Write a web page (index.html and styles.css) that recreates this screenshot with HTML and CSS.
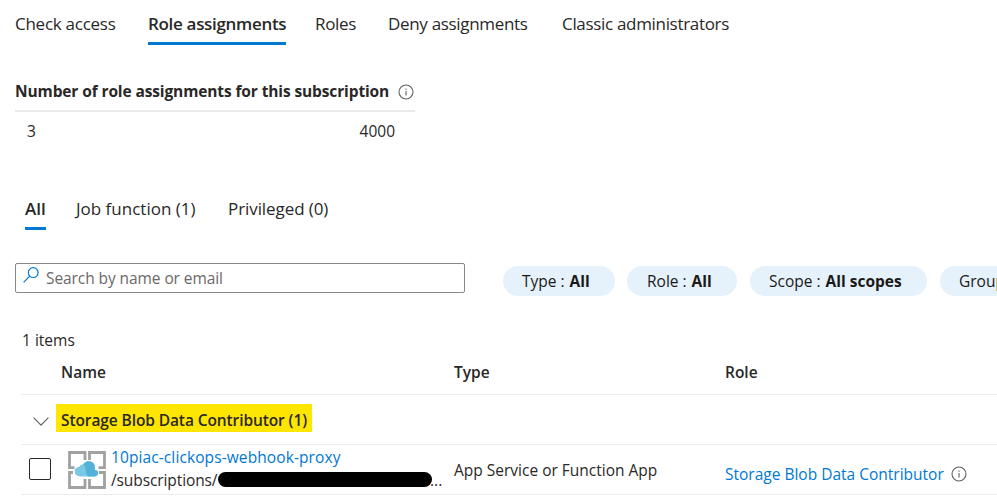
FILE: index.html
```html
<!DOCTYPE html>
<html lang="en">
<head>
<meta charset="utf-8">
<title>Role assignments</title>
<link rel="stylesheet" href="styles.css">
</head>
<body>
<nav class="tabs">
  <a class="tab t-check">Check access</a>
  <a class="tab t-assign active">Role assignments</a>
  <a class="tab t-roles">Roles</a>
  <a class="tab t-deny">Deny assignments</a>
  <a class="tab t-classic">Classic administrators</a>
</nav>
<section class="quota">
  <h2 class="quota-title"><span class="quota-label">Number of role assignments for this subscription</span>
    <svg class="info" viewBox="0 0 16 16"><circle cx="8" cy="8" r="7"/><path d="M8 7v4.5M8 4.5v1.2"/></svg>
  </h2>
  <div class="quota-values"><span>3</span><span>4000</span></div>
</section>
<nav class="subtabs">
  <a class="tab s-all active">All</a>
  <a class="tab s-job">Job function (1)</a>
  <a class="tab s-priv">Privileged (0)</a>
</nav>
<div class="filters">
  <div class="search">
    <svg class="glass" viewBox="0 0 16 16"><circle cx="10.2" cy="5.6" r="4.9"/><path d="M6.7 9.2L.6 15.4"/></svg>
    <span class="placeholder">Search by name or email</span>
  </div>
  <div class="pill p-type"><span>Type :</span><b>All</b></div>
  <div class="pill p-role"><span>Role :</span><b>All</b></div>
  <div class="pill p-scope"><span>Scope :</span><b>All scopes</b></div>
  <div class="pill p-group"><span>Group</span></div>
</div>
<div class="count">1 items</div>
<div class="grid">
  <div class="row head"><span class="h-name">Name</span><span class="h-type">Type</span><span>Role</span></div>
  <div class="row group">
    <svg class="chevron" viewBox="0 0 16 9"><path d="M.6.7L8 8.1 15.4.7"/></svg>
    <span class="mark">Storage Blob Data Contributor (1)</span>
  </div>
  <div class="row item">
    <span class="check"></span>
    <svg class="app" viewBox="0 0 38 38">
      <path class="frame" d="M6.500 16.700H1.500V1.500h15.500V9M21.500 9V1.500h15v15.200H30.500M31 21.500h5.500v15h-15V28M17 28v8.500H1.500v-15H5"/>
      <g transform="translate(.5 .3) scale(.95)">
        <path class="cloud" d="M12.600 26.400C9 26.400 6.500 24 6.500 21.200c0-2.800 2.200-4.800 5-4.900.7-1.600 2.400-2.600 4-2.300 1.100-2.300 3.300-3.600 5.700-3.600 4.200 0 7.100 3.300 6.600 7.500-.1.600-.2 1.200-.4 1.700 2.500-.1 3.900 1.300 3.900 3.300s-1.600 3.500-3.800 3.500z"/>
        <path class="shade" d="M15.500 14c1.100-2.300 3.300-3.600 5.700-3.600 4.200 0 7.100 3.300 6.600 7.500-.1.600-.2 1.200-.4 1.700 2.500-.1 3.900 1.300 3.900 3.300s-1.600 3.500-3.800 3.500h-7c-3.400-3-.9-9.300-5-12.400z"/>
      </g>
    </svg>
    <div class="who">
      <a class="link who-name">10piac-clickops-webhook-proxy</a>
      <div class="path"><span class="sub">/subscriptions/</span><i class="redact"></i><span class="dots">...</span></div>
    </div>
    <span class="kind">App Service or Function App</span>
    <span class="role"><a class="link role-name">Storage Blob Data Contributor</a>
      <svg class="info" viewBox="0 0 16 16"><circle cx="8" cy="8" r="7"/><path d="M8 7v4.500M8 4.500v1.200"/></svg></span>
  </div>
</div>
</body>
</html>
```
FILE: styles.css
```css
* { box-sizing: border-box; }
body {
  margin: 0;
  width: 997px;
  height: 503px;
  overflow: hidden;
  background: #fff;
  color: #292827;
  font: 15.5px/20px "Open Sans", "Noto Sans", sans-serif;
  white-space: nowrap;
}
svg { fill: none; display: block; flex: none; }
.tabs, .subtabs { display: flex; font-size: 17px; line-height: 24px; }
.tabs { padding: 12px 0 0 15px; height: 45px; letter-spacing: -.32px; }
.subtabs { padding: 12px 0 0 25px; height: 45px; margin-top: 41px; }
.tab { height: 33px; flex: none; }
.active { font-weight: 600; border-bottom: 3px solid #0078d4; }
.t-check { width: 101px; margin-right: 32px; letter-spacing: -.26px; }
.t-assign { width: 138px; margin-right: 29px; }
.t-roles { width: 41px; margin-right: 32px; }
.t-deny { width: 140px; margin-right: 34px; }
.s-all { width: 21px; margin-right: 30px; }
.s-job { width: 120px; margin-right: 32px; }
.s-priv { letter-spacing: -.08px; }
.quota { margin: 36px 0 0 15px; width: 400px; }
.quota-title { display: flex; align-items: center; gap: 9px; margin: 0; height: 31px; padding-bottom: 8px; border-bottom: 2px solid #eaeaea; font-size: 15.5px; font-weight: 700; }
.quota-label { width: 374px; padding-bottom: 1px; letter-spacing: -.12px; }
.info { width: 16px; height: 16px; stroke: #605e5c; stroke-width: 1.1; }
.quota-values { display: flex; justify-content: space-between; padding: 9px 20px 0 12px; height: 32px; }
.filters { display: flex; align-items: flex-start; margin: 33px 0 0 15px; height: 33px; overflow: hidden; }
.search { display: flex; width: 450px; height: 30px; margin-right: 38px; padding-left: 7px; border: 1px solid #8a8886; border-radius: 2px; flex: none; }
.glass { width: 16px; height: 16px; margin: 3px 7px 0 0; stroke: #0078d4; stroke-width: 1.2; }
.placeholder { line-height: 29px; color: #6b6967; letter-spacing: -.08px; }
.pill { display: flex; gap: 5px; flex: none; height: 30px; margin: 3px 12px 0 0; padding-left: 19px; border-radius: 15px; background: #e5f1fb; line-height: 31px; color: #1b1a19; }
.p-type { width: 112px; }
.p-role { width: 110px; margin-right: 13px; padding-left: 20px; }
.p-scope { width: 177px; margin-right: 13px; }
.p-group { width: 57px; margin-right: 0; border-radius: 15px 0 0 15px; overflow: hidden; }
.count { margin: 34px 0 0 22px; height: 21px; }
.grid { margin-left: 21px; }
.row { display: flex; align-items: center; height: 50px; border-bottom: 1px solid #ececec; }
.head { height: 44px; padding: 0 0 1px 40px; font-weight: 600; }
.h-name { width: 393px; }
.h-type { width: 271px; }
.chevron { width: 16px; height: 9px; margin: 4px 6px 0 12px; stroke: #605e5c; stroke-width: 1.1; }
.mark { width: 256px; height: 28px; margin: 0 0 3px 1px; padding: 4px 0 0 5px; line-height: 25px; background: #ffe600; font-weight: 600; letter-spacing: -.1px; }
.check { width: 22px; height: 22px; margin: 0 17px 1px 8px; border: 1.5px solid #292827; border-radius: 2px; flex: none; }
.app { width: 38px; height: 38px; }
.frame { stroke: #a0a1a2; stroke-width: 2.8; }
.cloud { fill: #7ac8e6; }
.shade { fill: #53b1da; }
.who { width: 348px; padding: 0 0 2px 5px; line-height: 22px; flex: none; }
.link { color: #0078d4; }
.who-name { display: block; letter-spacing: .1px; }
.path { display: flex; align-items: center; height: 23px; }
.sub { width: 107px; flex: none; letter-spacing: -.1px; }
.redact { width: 214px; height: 15px; margin-bottom: 1px; border-radius: 8px; background: #000; flex: none; }
.dots { margin-left: -2px; }
.kind { width: 271px; }
.role { display: flex; align-items: center; padding-top: 8px; }
.role-name { width: 218px; margin-right: 8px; }
```
